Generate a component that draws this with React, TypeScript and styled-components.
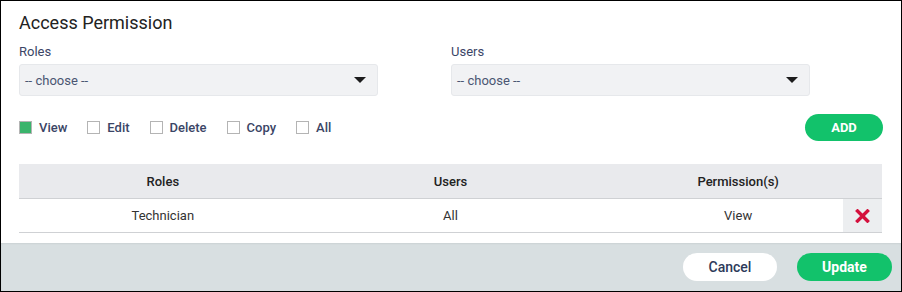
import React from 'react';
import styled, { createGlobalStyle } from 'styled-components';

const GREEN = '#12c26b';
const INK = '#3b4566';

const GlobalStyle = createGlobalStyle`
  html, body {
    margin: 0;
    padding: 0;
    background: #fff;
  }
  body {
    font-family: Roboto, 'Liberation Sans', Arial, sans-serif;
  }
  * {
    box-sizing: border-box;
  }
`;

const Frame = styled.div`
  width: 902px;
  height: 292px;
  border: 1px solid #000;
  display: flex;
  flex-direction: column;
  background: #fff;
`;

const Body = styled.div`
  flex: 1;
  padding: 11px 18px 0 18px;
`;

const Title = styled.h2`
  margin: 0 0 10px;
  font-size: 18px;
  line-height: 22px;
  font-weight: 400;
  color: #222;
`;

const Fields = styled.div`
  display: grid;
  grid-template-columns: 432px 432px;
`;

const Field = styled.div`
  display: flex;
  flex-direction: column;
`;

const Label = styled.label`
  font-size: 13px;
  line-height: 16px;
  color: ${INK};
  margin-bottom: 4px;
`;

const Select = styled.div`
  position: relative;
  width: 359px;
  height: 32px;
  display: flex;
  align-items: center;
  padding: 0 5px;
  background: #f1f2f4;
  border: 1px solid #e6e8eb;
  border-radius: 3px;
  font-size: 13px;
  color: #4a5572;
`;

const Caret = styled.span`
  margin-left: auto;
  margin-right: 6px;
  width: 0;
  height: 0;
  border-left: 6px solid transparent;
  border-right: 6px solid transparent;
  border-top: 6px solid #1c1c1c;
`;

const Toolbar = styled.div`
  margin-top: 18px;
  height: 27px;
  display: flex;
  align-items: center;
`;

const Checks = styled.div`
  display: flex;
  align-items: center;
  gap: 20px;
`;

const Check = styled.label`
  display: flex;
  align-items: center;
  gap: 7px;
  font-size: 13px;
  font-weight: 500;
  color: ${INK};
`;

const Box = styled.span<{ $checked?: boolean }>`
  width: 13px;
  height: 13px;
  border: 1px solid #b4b4b4;
  background: ${({ $checked }) => ($checked ? '#3ab46c' : '#fff')};
  background-clip: padding-box;
  margin-top: -1px;
`;

const AddButton = styled.button`
  margin-left: auto;
  width: 78px;
  height: 27px;
  border: none;
  border-radius: 14px;
  background: ${GREEN};
  color: #fff;
  font-family: inherit;
  font-size: 13px;
  font-weight: 700;
`;

const Table = styled.div`
  margin-top: 23px;
  width: 863px;
`;

const Row = styled.div<{ $head?: boolean }>`
  position: relative;
  display: grid;
  grid-template-columns: 1fr 1fr 1fr;
  height: ${({ $head }) => ($head ? '35px' : '34px')};
  align-items: center;
  background: ${({ $head }) => ($head ? '#e9eaed' : '#fff')};
  border-bottom: 1px solid #cfd1d4;
  font-size: 13px;
  font-weight: ${({ $head }) => ($head ? 500 : 400)};
  color: ${({ $head }) => ($head ? '#222' : '#333')};
`;

const Cell = styled.div`
  text-align: center;
`;

const DeleteCell = styled.button`
  position: absolute;
  right: 0;
  top: 0;
  bottom: 0;
  width: 39px;
  border: none;
  padding: 0;
  background: #eceef0;
  display: flex;
  align-items: center;
  justify-content: center;
`;

const Footer = styled.div`
  height: 48px;
  display: flex;
  align-items: center;
  justify-content: flex-end;
  gap: 20px;
  padding-right: 9px;
  background: #d8dfe1;
  box-shadow: inset 0 1px 2px rgba(0, 0, 0, 0.06);
`;

const PillButton = styled.button<{ $primary?: boolean }>`
  width: ${({ $primary }) => ($primary ? '95px' : '94px')};
  height: 28px;
  border: none;
  border-radius: 14px;
  background: ${({ $primary }) => ($primary ? GREEN : '#fff')};
  color: ${({ $primary }) => ($primary ? '#fff' : '#2d3a5a')};
  font-family: inherit;
  font-size: 14px;
  font-weight: ${({ $primary }) => ($primary ? 700 : 500)};
`;

const permissions = [
  { name: 'View', checked: true },
  { name: 'Edit' },
  { name: 'Delete' },
  { name: 'Copy' },
  { name: 'All' },
];

const rows = [{ role: 'Technician', users: 'All', perms: 'View' }];

const CrossIcon = () => (
  <svg width="15" height="14" viewBox="0 0 15 14">
    <path d="M2.5 2 L12.5 12 M12.5 2 L2.5 12" stroke="#d4103d" strokeWidth="3.4" strokeLinecap="square" />
  </svg>
);

export default function App() {
  return (
    <>
      <GlobalStyle />
      <Frame>
        <Body>
          <Title>Access Permission</Title>
          <Fields>
            <Field>
              <Label>Roles</Label>
              <Select>
                -- choose --
                <Caret />
              </Select>
            </Field>
            <Field>
              <Label>Users</Label>
              <Select>
                -- choose --
                <Caret />
              </Select>
            </Field>
          </Fields>
          <Toolbar>
            <Checks>
              {permissions.map(p => (
                <Check key={p.name}>
                  <Box $checked={p.checked} />
                  {p.name}
                </Check>
              ))}
            </Checks>
            <AddButton>ADD</AddButton>
          </Toolbar>
          <Table>
            <Row $head>
              <Cell>Roles</Cell>
              <Cell>Users</Cell>
              <Cell>Permission(s)</Cell>
            </Row>
            {rows.map(r => (
              <Row key={r.role}>
                <Cell>{r.role}</Cell>
                <Cell>{r.users}</Cell>
                <Cell>{r.perms}</Cell>
                <DeleteCell>
                  <CrossIcon />
                </DeleteCell>
              </Row>
            ))}
          </Table>
        </Body>
        <Footer>
          <PillButton>Cancel</PillButton>
          <PillButton $primary>Update</PillButton>
        </Footer>
      </Frame>
    </>
  );
}
